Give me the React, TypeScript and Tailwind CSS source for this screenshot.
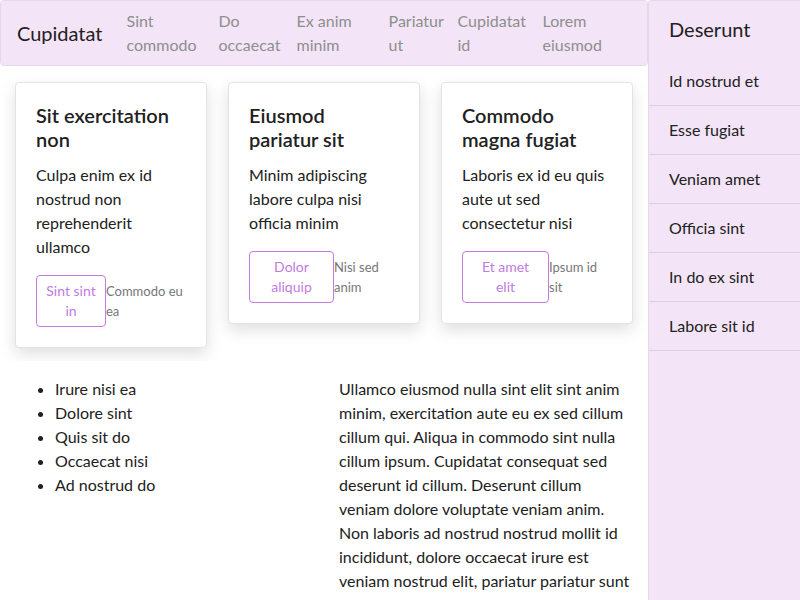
const font = { fontFamily: 'Lato, "Noto Sans", sans-serif' };

const nav = [
  { label: 'Sint commodo', w: 'w-[92px]' },
  { label: 'Do occaecat', w: 'w-[78px]' },
  { label: 'Ex anim minim', w: 'w-[92px]' },
  { label: 'Pariatur ut', w: 'w-[69px]' },
  { label: 'Cupidatat id', w: 'w-[85px]' },
  { label: 'Lorem eiusmod', w: 'w-[80px]' },
];

const cards = [
  {
    title: 'Sit exercitation non',
    body: 'Culpa enim ex id nostrud non reprehenderit ullamco',
    button: 'Sint sint in',
    bw: 'w-[70px] px-1',
    note: 'Commodo eu ea',
  },
  {
    title: 'Eiusmod pariatur sit',
    body: 'Minim adipiscing labore culpa nisi officia minim',
    button: 'Dolor aliquip',
    bw: 'w-[85px] px-3',
    note: 'Nisi sed anim',
  },
  {
    title: 'Commodo magna fugiat',
    body: 'Laboris ex id eu quis aute ut sed consectetur nisi',
    button: 'Et amet elit',
    bw: 'w-[87px] px-3',
    note: 'Ipsum id sit',
  },
];

const list = ['Irure nisi ea', 'Dolore sint', 'Quis sit do', 'Occaecat nisi', 'Ad nostrud do'];

const side = ['Id nostrud et', 'Esse fugiat', 'Veniam amet', 'Officia sint', 'In do ex sint', 'Labore sit id'];

export default function App() {
  return (
    <div className="flex h-[600px] w-[800px] overflow-hidden bg-white text-[#212121]" style={font}>
      {/* Main column */}
      <div className="flex w-[648px] shrink-0 flex-col">
        {/* Header */}
        <header className="flex h-[66px] shrink-0 items-center gap-6 rounded border border-[#e2dbe6] bg-[#f3e5f7] px-4">
          <span className="text-xl">Cupidatat</span>
          <nav className="flex items-center">
            {nav.map((n) => (
              <a key={n.label} className={`${n.w} text-base leading-6 text-[#8e8e8e]`}>
                {n.label}
              </a>
            ))}
          </nav>
        </header>

        {/* Cards */}
        <div className="grid grid-cols-3 items-start gap-[21px] px-[15px] pt-4 pb-[13px]">
          {cards.map((c) => (
            <div key={c.title} className="rounded border border-[#e3e3e3] bg-white p-5 shadow-[0_6px_16px_rgba(0,0,0,0.13)]">
              <h2 className="max-w-[140px] text-xl leading-6 font-semibold">{c.title}</h2>
              <p className="mt-3 text-base leading-6">{c.body}</p>
              <div className="mt-4 flex items-center">
                <button
                  className={`${c.bw} shrink-0 rounded border border-[#c27be0] py-[5px] text-sm leading-5 text-[#c27be0]`}
                >
                  {c.button}
                </button>
                <span className="text-[13px] leading-5 text-[#777]">{c.note}</span>
              </div>
            </div>
          ))}
        </div>

        {/* Bottom section */}
        <div className="grid flex-1 grid-cols-2 gap-[30px] bg-white px-[15px] pt-4">
          <ul className="list-disc pl-10 text-base leading-6">
            {list.map((l) => (
              <li key={l}>{l}</li>
            ))}
          </ul>
          <p className="text-base leading-6">
            Ullamco eiusmod nulla sint elit sint anim minim, exercitation aute eu ex sed cillum cillum qui. Aliqua in
            commodo sint nulla cillum ipsum. Cupidatat consequat sed deserunt id cillum. Deserunt cillum veniam dolore
            voluptate veniam anim. Non laboris ad nostrud nostrud mollit id incididunt, dolore occaecat irure est veniam
            nostrud elit, pariatur pariatur sunt dolore commodo laboris adipisicing.
          </p>
        </div>
      </div>

      {/* Sidebar */}
      <aside className="flex-1 rounded-tl border-l border-t border-[#e2dbe6] bg-[#f3e5f7]">
        <h3 className="px-5 pt-[14px] pb-[14px] text-xl leading-7">Deserunt</h3>
        {side.map((s) => (
          <div key={s} className="border-b border-[#dccfe0] px-5 py-3 text-base leading-6">
            {s}
          </div>
        ))}
      </aside>
    </div>
  );
}
